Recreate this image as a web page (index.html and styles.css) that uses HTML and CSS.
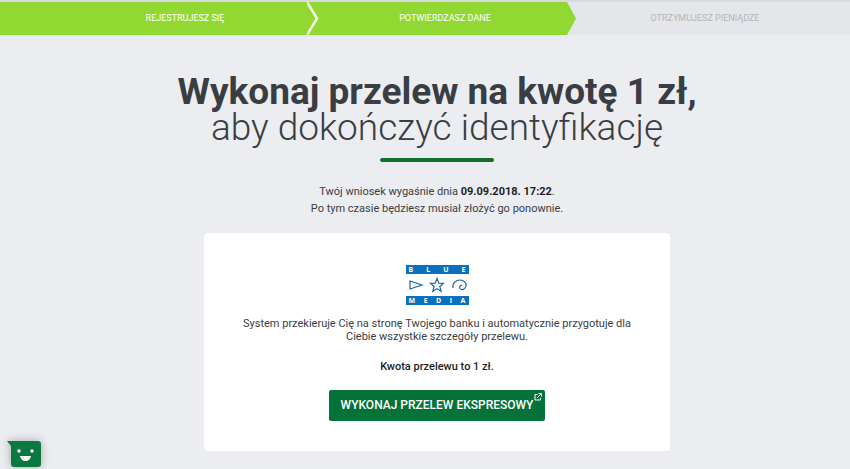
FILE: index.html
```html
<!DOCTYPE html>
<html lang="pl">
<head>
  <meta charset="UTF-8">
  <title>Wykonaj przelew</title>
  <link rel="stylesheet" href="styles.css">
</head>
<body>
<nav class="steps">
  <ol class="steps-list">
    <li class="step done">Rejestrujesz się</li>
    <li class="step active">
      <svg class="arrow" viewBox="0 0 12 33"><path d="M0 0L10 16.500L0 33" fill="none" stroke="#f3fbe4" stroke-width="2.500"/></svg>
      Potwierdzasz dane
    </li>
    <li class="step next">
      <svg class="arrow" viewBox="0 0 12 33"><path d="M0 0L9 16.500L0 33Z" fill="#92d832"/></svg>
      Otrzymujesz pieniądze
    </li>
  </ol>
</nav>

<main class="content">
  <h1 class="title"><strong>Wykonaj przelew na kwotę 1 zł,</strong> <span>aby dokończyć identyfikację</span></h1>
  <div class="line"></div>
  <p class="info">Twój wniosek wygaśnie dnia <b>09.09.2018. 17:22</b>.<br>Po tym czasie będziesz musiał złożyć go ponownie.</p>

  <section class="card">
    <div class="logo">
      <div class="logo-row"><span>B</span><span>L</span><span>U</span><span>E</span></div>
      <svg class="logo-signs" viewBox="0 0 63 22" fill="none" stroke="#1c66a8" stroke-width="1.200">
        <path d="M4 7L16 11L4 15Z"/>
        <path d="M31 4.500L32.800 9.200L37.500 9.400L33.800 12.500L35.200 17.300L31 14.600L26.800 17.300L28.200 12.500L24.500 9.400L29.200 9.200Z"/>
        <path d="M47 14C46 9 50 6 54 6C58 6 60.500 9 60 12C59.500 15.500 55.500 16.500 54 14.500C53 12.500 54.500 11 56 11.500"/>
      </svg>
      <div class="logo-row"><span>M</span><span>E</span><span>D</span><span>I</span><span>A</span></div>
    </div>
    <p class="text">System przekieruje Cię na stronę Twojego banku i automatycznie przygotuje dla Ciebie wszystkie szczegóły przelewu.</p>
    <p class="amount">Kwota przelewu to 1 zł.</p>
    <button class="btn" type="button">
      Wykonaj przelew ekspresowy
      <svg class="external" viewBox="0 0 8 8" fill="none" stroke="#fff"><path d="M3.500 1.500H1V7H6.500V5M3 5L7 1M4.500 .600H7.400V3.500"/></svg>
    </button>
  </section>
</main>

<button class="chat" type="button" aria-label="Czat">
  <svg viewBox="0 0 34 26">
    <path d="M0 0H31Q34 0 34 3V23Q34 26 31 26H7Q4 26 4 23V5Z" fill="#0b7840"/>
    <circle cx="12" cy="10" r="1.700" fill="#fff"/>
    <circle cx="25" cy="10" r="1.700" fill="#fff"/>
    <path d="M13 15H24Q23 20 18.500 20Q14 20 13 15Z" fill="#fff"/>
  </svg>
</button>
</body>
</html>
```

FILE: styles.css
```css
* {
  margin: 0;
  padding: 0;
  box-sizing: border-box;
}

body {
  background: #ebedf1;
  color: #3a3e43;
  font-family: Roboto, "Open Sans", sans-serif;
  font-size: 11px;
}

button {
  border: 0;
  font-family: inherit;
  cursor: pointer;
}

/* kroki */
.steps {
  padding-left: 24px;
  border-top: 2px solid #d8dadb;
  background: linear-gradient(to right, #92d832 50%, #e4e6e9 50%);
}

.steps-list {
  display: flex;
  max-width: 780px;
  margin: 0 auto;
  list-style: none;
}

.step {
  position: relative;
  flex: 1;
  padding-left: 16px;
  color: #fff;
  font-size: 9px;
  line-height: 33px;
  text-align: center;
  text-transform: uppercase;
}

.active {
  background: #92d832;
}

.next {
  background: #e4e6e9;
  color: #b4b6b9;
}

.arrow {
  position: absolute;
  left: 0;
  top: 0;
  width: 12px;
  height: 33px;
}

/* tresc */
.content {
  padding: 39px 0 18px 24px;
  text-align: center;
}

.title {
  font-size: 37px;
  font-weight: 300;
  line-height: 36px;
}

.title strong,
.title span {
  display: block;
}

.title strong {
  font-weight: 700;
}

.line {
  width: 114px;
  height: 4px;
  margin: 12px auto 21px;
  border-radius: 2px;
  background: #13702a;
}

.info {
  line-height: 17px;
}

.info b {
  color: #1c1f22;
}

.card {
  max-width: 466px;
  margin: 16px auto 0;
  padding: 32px 30px 30px;
  border-radius: 4px;
  background: #fff;
}

.logo {
  width: 63px;
  margin: 0 auto 12px;
}

.logo-row {
  display: flex;
  justify-content: space-between;
  padding: 0 3px;
  background: #0d70bd;
  color: #fff;
  font-family: "Open Sans", sans-serif;
  font-size: 7px;
  font-weight: 700;
  line-height: 9px;
}

.logo-signs {
  display: block;
  height: 22px;
}

.text {
  line-height: 13px;
}

.amount {
  margin: 17px 0;
  color: #1c1f22;
  font-weight: 500;
  line-height: 13px;
}

.btn {
  position: relative;
  padding: 0 12px;
  border-radius: 2px;
  background: #04733a;
  color: #fff;
  font-size: 12px;
  font-weight: 500;
  line-height: 31px;
  text-transform: uppercase;
}

.external {
  position: absolute;
  top: 3px;
  right: 3px;
  width: 8px;
  height: 8px;
}

/* czat */
.chat {
  position: fixed;
  left: 7px;
  bottom: 2px;
  width: 34px;
  height: 26px;
  background: none;
  filter: drop-shadow(0 0 4px rgba(0, 0, 0, .3));
}

.chat svg {
  display: block;
}
```
